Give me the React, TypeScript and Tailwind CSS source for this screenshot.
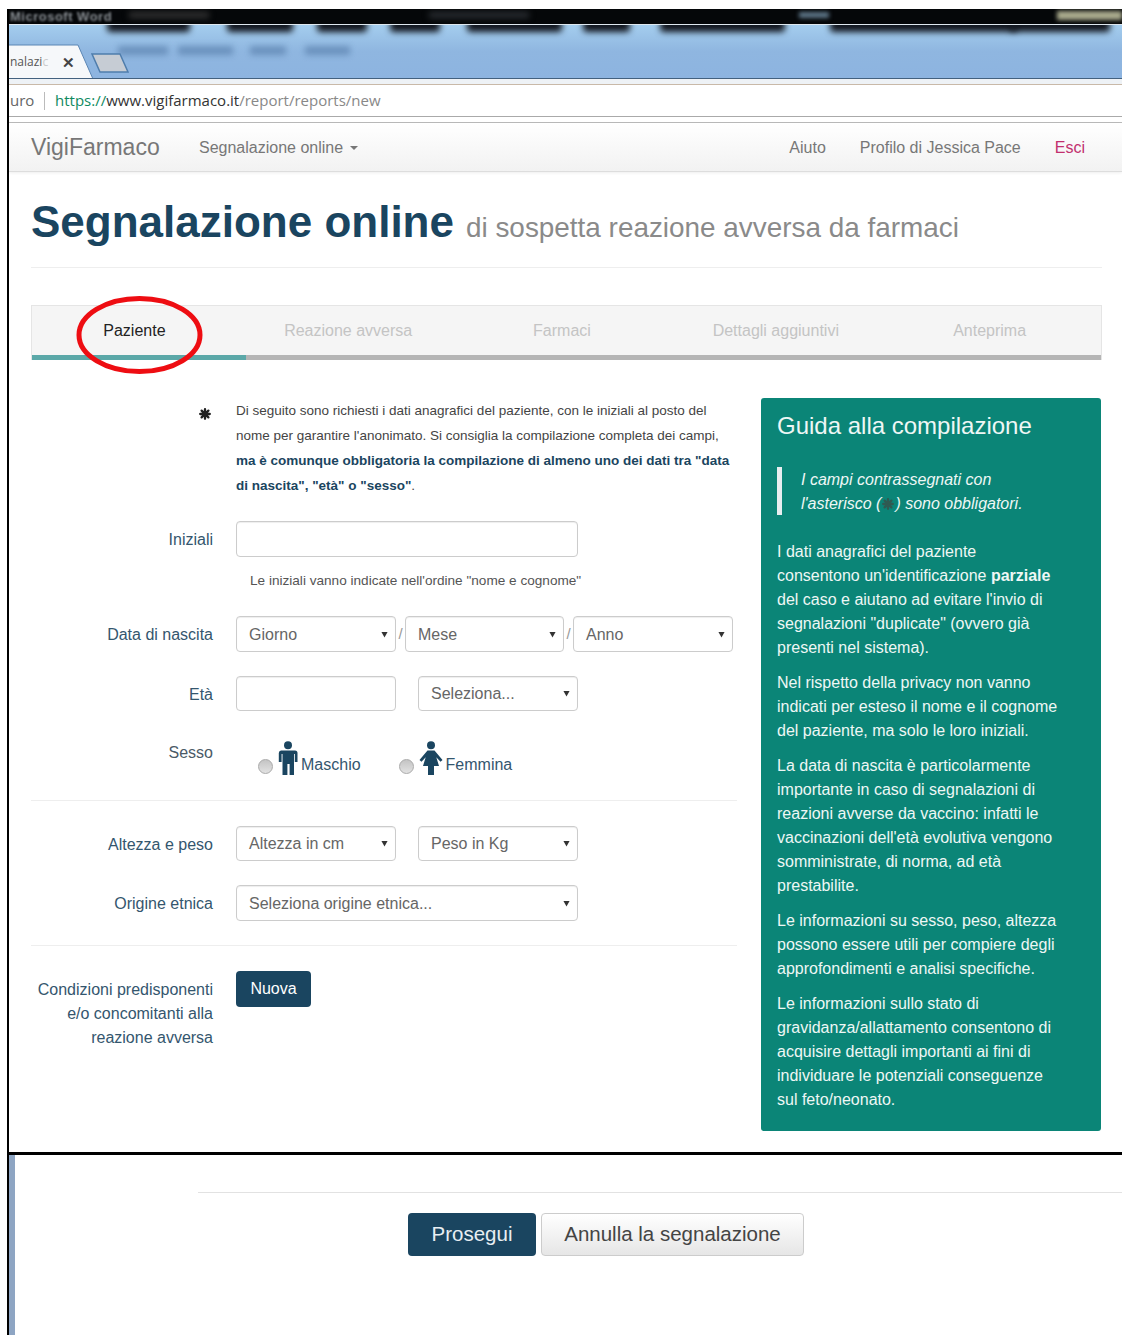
import React from "react";

const NAVY = "#1a4560";

// Blurred shapes behind the browser's tab strip
const darkBlobs = [
  [107, 83], [227, 66], [317, 50], [390, 50], [467, 95], [583, 47], [660, 125], [830, 187], [1010, 100],
];
const ribbonLabels = [
  [118, 50], [178, 55], [250, 36], [305, 45],
];

function Star({ className = "", color = "#222" }: { className?: string; color?: string }) {
  return (
    <svg viewBox="0 0 12 12" className={className}>
      <g stroke={color} strokeWidth="2.3" strokeLinecap="round">
        <path d="M6 1.2v9.6M1.2 6h9.6M2.6 2.6l6.8 6.8M9.4 2.6l-6.8 6.8" />
      </g>
    </svg>
  );
}

function Caret() {
  return (
    <svg viewBox="0 0 8 8" className="w-[7px] h-[7px] shrink-0">
      <path d="M0.5 1h7L4 7.5z" fill="#333" />
    </svg>
  );
}

function Select({ label, className }: { label: string; className: string }) {
  return (
    <div className={`flex items-center justify-between pl-[12px] pr-[7px] bg-white border border-[#ccc] rounded-[4px] shadow-[inset_0_1px_1px_rgba(0,0,0,0.07)] text-[16px] text-[#666] ${className}`}>
      <span className="pt-[1px]">{label}</span>
      <Caret />
    </div>
  );
}

function Input({ className }: { className: string }) {
  return <div className={`bg-white border border-[#ccc] rounded-[4px] shadow-[inset_0_1px_1px_rgba(0,0,0,0.07)] ${className}`} />;
}

function Label({ children, className = "pt-[2px]" }: { children: React.ReactNode; className?: string }) {
  return <div className={`w-[182px] shrink-0 text-right text-[16px] text-[#34566e] ${className}`}>{children}</div>;
}

function Radio() {
  return <span className="block w-[15px] h-[15px] rounded-full border border-[#aaa] bg-gradient-to-b from-[#c4c4c4] to-[#e2e2e2]" />;
}

function Man() {
  return (
    <svg viewBox="0 0 20 34" className="w-[20px] h-[34px]">
      <circle cx="10" cy="4.2" r="4" fill={NAVY} />
      <path d="M3 9.5h14a2.5 2.5 0 0 1 2.5 2.5v9h-2.7v-8h-.8v21h-4.4V23h-2.2v11H4.5V13h-.9v8H.8v-9A2.8 2.8 0 0 1 3 9.5z" fill={NAVY} />
    </svg>
  );
}

function Woman() {
  return (
    <svg viewBox="0 0 24 34" className="w-[24px] h-[34px]">
      <circle cx="12" cy="4.2" r="4" fill={NAVY} />
      <path d="M8.5 9.5h7L23.5 19l-2 1.8-4.2-4.6L20 25h-5v9h-6v-9H4l2.7-8.8-4.2 4.6-2-1.8z" fill={NAVY} />
    </svg>
  );
}

function Tab({ children, active }: { children: string; active?: boolean }) {
  return (
    <div className="w-[214px] flex flex-col">
      <div className={`h-[49px] flex items-center justify-center pr-[9px] text-[16px] ${active ? "text-[#222]" : "text-[#c4c4c4]"}`}>{children}</div>
      <div className={`h-[5px] ${active ? "bg-[#5ba8a8]" : "bg-[#b5b5b5]"}`} />
    </div>
  );
}

function GuideParagraph({ children }: { children: React.ReactNode }) {
  return <p className="mb-[11px] text-[16px] leading-[24px]">{children}</p>;
}

export default function App() {
  return (
    <div className="relative w-[1122px] h-[1335px] overflow-hidden bg-white font-['Liberation_Sans',Arial,sans-serif]">
      <div className="h-[9px]" />

      <div className="ml-[7px] border-l-2 border-black h-[1143px]">
        {/* Browser chrome */}
        <div className="relative h-[15px] bg-[#050709] overflow-hidden">
          <div className="absolute left-[1px] top-0 text-[13px] leading-[15px] font-bold tracking-[0.5px] text-[#8a8f94] blur-[1px] whitespace-nowrap">Microsoft Word</div>
          <div className="absolute right-0 top-[2px] w-[65px] h-[9px] bg-[#a8a98c] blur-[2px]" />
          <div className="absolute left-[790px] top-[3px] w-[30px] h-[6px] bg-[#5d7688] blur-[2px]" />
          <div className="absolute left-[120px] top-[3px] w-[80px] h-[6px] bg-[#333] blur-[3px]" />
          <div className="absolute left-[420px] top-[3px] w-[100px] h-[6px] bg-[#2b2f33] blur-[3px]" />
        </div>
        <div className="h-px bg-[#dfe8ef]" />
        <div className="relative h-[54px] overflow-hidden bg-gradient-to-b from-[#a4cdee] via-[#8fb6e0] to-[#8db4e0] border-b border-[#43617f]">
          {darkBlobs.map(([x, w]) => (
            <div key={x} className="absolute top-[-6px] h-[13px] rounded-[4px] bg-[#10141c] blur-[3px]" style={{ left: x - 9, width: w }} />
          ))}
          {ribbonLabels.map(([x, w]) => (
            <div key={x} className="absolute top-[21px] h-[9px] bg-[#5279a6] opacity-60 blur-[3px]" style={{ left: x - 9, width: w }} />
          ))}
          <svg viewBox="0 0 125 54" className="absolute left-0 top-0 w-[125px] h-[54px]">
            <path d="M-2 20H69L84 54H-2z" fill="#f6f8fa" stroke="#5b86b4" />
            <path d="M83 29h28l8 18H91z" fill="#c6ccd4" stroke="#4f7dac" strokeWidth="1.5" />
          </svg>
          <div className="absolute left-0 top-[29px] w-[80px] flex items-center font-['Open_Sans',sans-serif] text-[12px] leading-[16px] text-[#555]">
            <span className="w-[44px] whitespace-nowrap pl-[1px]">nalazi<span className="text-[#ccc]">c</span></span>
            <span className="ml-[9px] text-[15px] font-bold text-[#444]">✕</span>
          </div>
        </div>
        <div className="h-[5px] bg-[#eef2f6]" />
        <div className="h-px bg-[#c9b9a8]" />
        <div className="h-[31px] flex items-center bg-white font-['Open_Sans',sans-serif] text-[15px]">
          <span className="w-[35px] pl-[1px] text-[#666]">uro</span>
          <span className="w-px h-[18px] bg-[#bbb]" />
          <span className="ml-[10px] text-[#0f8a5f]">https://</span>
          <span className="text-[#333]">www.vigifarmaco.it</span>
          <span className="text-[#888]">/report/reports/new</span>
        </div>
        <div className="h-px bg-[#aaa]" />
        <div className="h-[5px] bg-white" />
        <div className="h-px bg-[#bbb]" />

        {/* Site navigation */}
        <div className="h-[49px] flex items-center pl-[22px] pr-[37px] bg-gradient-to-b from-white to-[#f2f2f2] border-b border-[#ddd] shadow-[0_1px_3px_rgba(0,0,0,0.07)] text-[#777]">
          <span className="w-[168px] text-[23px]">VigiFarmaco</span>
          <span className="flex items-center text-[16px] pt-[2px]">
            Segnalazione online
            <svg viewBox="0 0 8 4" className="ml-[7px] w-[8px] h-[4px]">
              <path d="M0 0h8L4 4z" fill="#777" />
            </svg>
          </span>
          <span className="ml-auto text-[16px] pt-[2px]">Aiuto</span>
          <span className="ml-[34px] text-[16px] pt-[2px]">Profilo di Jessica Pace</span>
          <span className="ml-[34px] text-[16px] pt-[2px] text-[#c2306e]">Esci</span>
        </div>

        {/* Page title */}
        <div className="mx-[22px] w-[1071px]">
          <div className="h-[96px] border-b border-[#eee] flex items-baseline pt-[21px] mb-[37px]">
            <h1 className="text-[44px] leading-[58px] font-bold text-[#1a4560] whitespace-nowrap">Segnalazione online</h1>
            <span className="ml-[12px] text-[27.9px] text-[#8a8a8a] whitespace-nowrap">di sospetta reazione avversa da farmaci</span>
          </div>

          {/* Steps */}
          <div className="flex bg-[#f5f5f5] border border-b-0 border-[#e5e5e5] w-[1071px] h-[55px]">
            <Tab active>Paziente</Tab>
            <Tab>Reazione avversa</Tab>
            <Tab>Farmaci</Tab>
            <Tab>Dettagli aggiuntivi</Tab>
            <Tab>Anteprima</Tab>
          </div>

          <div className="flex mt-[38px]">
            {/* Patient form */}
            <div className="w-[706px] shrink-0">
              <div className="flex">
                <div className="w-[180px] shrink-0 flex justify-end pt-[10px]">
                  <Star className="w-[12px] h-[12px]" />
                </div>
                <div className="ml-[25px] w-[505px] text-[13.5px] leading-[25px] text-[#444] whitespace-nowrap">
                  Di seguito sono richiesti i dati anagrafici del paziente, con le iniziali al posto del
                  <br />
                  nome per garantire l'anonimato. Si consiglia la compilazione completa dei campi,
                  <br />
                  <b className="text-[#1a4560]">ma è comunque obbligatoria la compilazione di almeno uno dei dati tra "data</b>
                  <br />
                  <b className="text-[#1a4560]">di nascita", "età" o "sesso"</b>.
                </div>
              </div>

              <div className="flex items-center mt-[23px]">
                <Label>Iniziali</Label>
                <Input className="ml-[23px] w-[342px] h-[36px]" />
              </div>
              <div className="ml-[219px] mt-[15px] text-[13.6px] leading-[18px] text-[#555] whitespace-nowrap">
                Le iniziali vanno indicate nell'ordine "nome e cognome"
              </div>

              <div className="flex items-center mt-[26px]">
                <Label>Data di nascita</Label>
                <Select label="Giorno" className="ml-[23px] w-[160px] h-[36px]" />
                <span className="w-[9px] text-center text-[#999] text-[15px]">/</span>
                <Select label="Mese" className="w-[159px] h-[36px]" />
                <span className="w-[9px] text-center text-[#999] text-[15px]">/</span>
                <Select label="Anno" className="w-[160px] h-[36px]" />
              </div>

              <div className="flex items-center mt-[24px]">
                <Label>Età</Label>
                <Input className="ml-[23px] w-[160px] h-[35px]" />
                <Select label="Seleziona..." className="ml-[22px] w-[160px] h-[35px]" />
              </div>

              <div className="flex mt-[31px] h-[59px] border-b border-[#eee]">
                <Label className="pt-[2px] leading-[18px] !text-[#4a5a66]">Sesso</Label>
                <div className="ml-[45px] flex items-start -mt-[1px]">
                  <div className="flex items-end">
                    <span className="mb-[1px]"><Radio /></span>
                    <span className="ml-[5px]"><Man /></span>
                    <span className="ml-[3px] text-[16px] leading-[18px] mb-[1px] text-[#34566e]">Maschio</span>
                  </div>
                  <div className="flex items-end ml-[38px]">
                    <span className="mb-[1px]"><Radio /></span>
                    <span className="ml-[5px]"><Woman /></span>
                    <span className="ml-[3px] text-[16px] leading-[18px] mb-[1px] text-[#34566e]">Femmina</span>
                  </div>
                </div>
              </div>

              <div className="flex items-center mt-[25px]">
                <Label>Altezza e peso</Label>
                <Select label="Altezza in cm" className="ml-[23px] w-[160px] h-[35px]" />
                <Select label="Peso in Kg" className="ml-[22px] w-[160px] h-[35px]" />
              </div>

              <div className="flex items-center mt-[24px]">
                <Label>Origine etnica</Label>
                <Select label="Seleziona origine etnica..." className="ml-[23px] w-[342px] h-[36px]" />
              </div>

              <div className="h-px bg-[#eee] mt-[24px]" />

              <div className="flex mt-[25px]">
                <Label className="leading-[24px] pt-[7px]">
                  Condizioni predisponenti
                  <br />
                  e/o concomitanti alla
                  <br />
                  reazione avversa
                </Label>
                <button className="ml-[23px] w-[75px] h-[36px] rounded-[4px] bg-[#1a4560] text-white text-[16px]">Nuova</button>
              </div>
            </div>

            {/* Guide panel */}
            <div className="ml-[24px] w-[340px] h-[733px] rounded-[3px] bg-[#0b8577] text-[#eef7f5] pl-[16px] pr-[41px] pt-[11px]">
              <h2 className="text-[24px] leading-[34px] mb-[24px] whitespace-nowrap">Guida alla compilazione</h2>
              <div className="border-l-[5px] border-[#e8eef0] pl-[19px] pt-[1px] italic text-[16px] leading-[24px] h-[48px] mb-[25px] whitespace-nowrap">
                I campi contrassegnati con
                <br />
                l'asterisco (<Star className="inline-block w-[12px] h-[12px] align-[-1px] mx-[1px]" color="#2f5a52" />) sono obbligatori.
              </div>
              <GuideParagraph>
                I dati anagrafici del paziente consentono un'identificazione <b>parziale</b> del caso e aiutano ad evitare l'invio di segnalazioni "duplicate" (ovvero già presenti nel sistema).
              </GuideParagraph>
              <GuideParagraph>
                Nel rispetto della privacy non vanno indicati per esteso il nome e il cognome del paziente, ma solo le loro iniziali.
              </GuideParagraph>
              <GuideParagraph>
                La data di nascita è particolarmente importante in caso di segnalazioni di reazioni avverse da vaccino: infatti le vaccinazioni dell'età evolutiva vengono somministrate, di norma, ad età prestabilite.
              </GuideParagraph>
              <GuideParagraph>
                Le informazioni su sesso, peso, altezza possono essere utili per compiere degli approfondimenti e analisi specifiche.
              </GuideParagraph>
              <GuideParagraph>
                Le informazioni sullo stato di gravidanza/allattamento consentono di acquisire dettagli importanti ai fini di individuare le potenziali conseguenze sul feto/neonato.
              </GuideParagraph>
            </div>
          </div>
        </div>
      </div>

      {/* Lower part of the page */}
      <div className="ml-[7px] h-[183px] border-t-[3px] border-l-2 border-t-black border-l-black relative">
        <div className="absolute left-0 top-0 bottom-0 w-[6px] bg-[#8ea5c3]" />
        <div className="ml-[189px] pt-[37px]">
          <div className="h-px bg-[#e2e2e2]" />
        </div>
        <div className="flex ml-[399px] mt-[20px] gap-[5px]">
          <button className="w-[128px] h-[43px] rounded-[4px] bg-[#1a4560] text-[#e8eef2] text-[20.5px]">Prosegui</button>
          <button className="w-[263px] h-[43px] rounded-[4px] border border-[#ccc] bg-gradient-to-b from-white to-[#e6e6e6] text-[#444] text-[20.5px]">Annulla la segnalazione</button>
        </div>
      </div>

      {/* Hand-drawn highlight around the current step */}
      <svg viewBox="0 0 127 78" className="absolute left-[76px] top-[296px] w-[127px] h-[78px] pointer-events-none">
        <ellipse cx="63.5" cy="39" rx="60.5" ry="36.5" fill="none" stroke="#ee0d12" strokeWidth="5" />
      </svg>
    </div>
  );
}
